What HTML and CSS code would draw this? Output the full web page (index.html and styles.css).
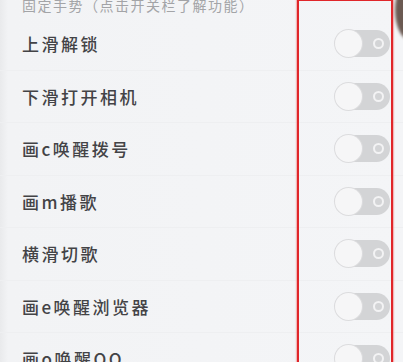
FILE: index.html
```html
<!DOCTYPE html>
<html lang="zh">
<head>
<meta charset="utf-8">
<link rel="stylesheet" href="styles.css">
</head>
<body>
<div class="screen">
  <div class="header">固定手势（点击开关栏了解功能）</div>
  <div class="list">
    <div class="row"><span class="label">上滑解锁</span><span class="toggle"><span class="knob"></span><span class="ring"></span></span></div>
    <div class="row"><span class="label">下滑打开相机</span><span class="toggle"><span class="knob"></span><span class="ring"></span></span></div>
    <div class="row"><span class="label">画c唤醒拨号</span><span class="toggle"><span class="knob"></span><span class="ring"></span></span></div>
    <div class="row"><span class="label">画m播歌</span><span class="toggle"><span class="knob"></span><span class="ring"></span></span></div>
    <div class="row"><span class="label">横滑切歌</span><span class="toggle"><span class="knob"></span><span class="ring"></span></span></div>
    <div class="row"><span class="label">画e唤醒浏览器</span><span class="toggle"><span class="knob"></span><span class="ring"></span></span></div>
    <div class="row"><span class="label">画o唤醒QQ</span><span class="toggle"><span class="knob"></span><span class="ring"></span></span></div>
  </div>
  <div class="highlight"></div>
  <div class="edge"></div>
</div>
</body>
</html>
```
FILE: styles.css
```css
html, body {
  margin: 0;
  padding: 0;
}
body {
  width: 403px;
  height: 362px;
  overflow: hidden;
  background: #f3f4f6;
  font-family: "Noto Sans CJK SC", "Noto Sans", sans-serif;
}
.screen {
  position: relative;
  width: 403px;
  height: 362px;
  overflow: hidden;
  background: linear-gradient(to right, #e9eaec 0, #f2f3f5 8px, #f4f5f7 100%);
}
.header {
  margin-top: -4px;
  height: 22px;
  line-height: 18px;
  padding-left: 22px;
  font-size: 14px;
  letter-spacing: 1.5px;
  color: #a3a4a7;
}
.list {
  display: flex;
  flex-direction: column;
}
.row {
  height: 52.5px;
  display: flex;
  align-items: center;
  justify-content: space-between;
  padding: 0 13px 0 22px;
  box-sizing: border-box;
  border-bottom: 1px solid #eeeff1;
}
.label {
  font-size: 17px;
  font-weight: 500;
  letter-spacing: 2.5px;
  color: #434346;
}
.toggle {
  position: relative;
  width: 55px;
  height: 27px;
  border-radius: 14px;
  background: #d3d4d6;
  display: flex;
  align-items: center;
  justify-content: space-between;
}
.knob {
  width: 27px;
  height: 27px;
  border-radius: 50%;
  background: #f6f6f7;
  box-shadow: 0 0 0 1px #dcdcde;
}
.ring {
  width: 7px;
  height: 7px;
  margin-right: 6px;
  border-radius: 50%;
  border: 2.5px solid #f3f3f4;
}
.highlight {
  position: absolute;
  left: 297px;
  top: -1px;
  width: 92px;
  height: 380px;
  border: 2px solid #e0262a;
  box-shadow: 0 0 1px 1px rgba(240, 120, 120, 0.5);
}
.edge {
  position: absolute;
  left: 395px;
  top: -20px;
  width: 30px;
  height: 60px;
  border-radius: 50%;
  background: #6b5a52;
  filter: blur(1.5px);
}
```
